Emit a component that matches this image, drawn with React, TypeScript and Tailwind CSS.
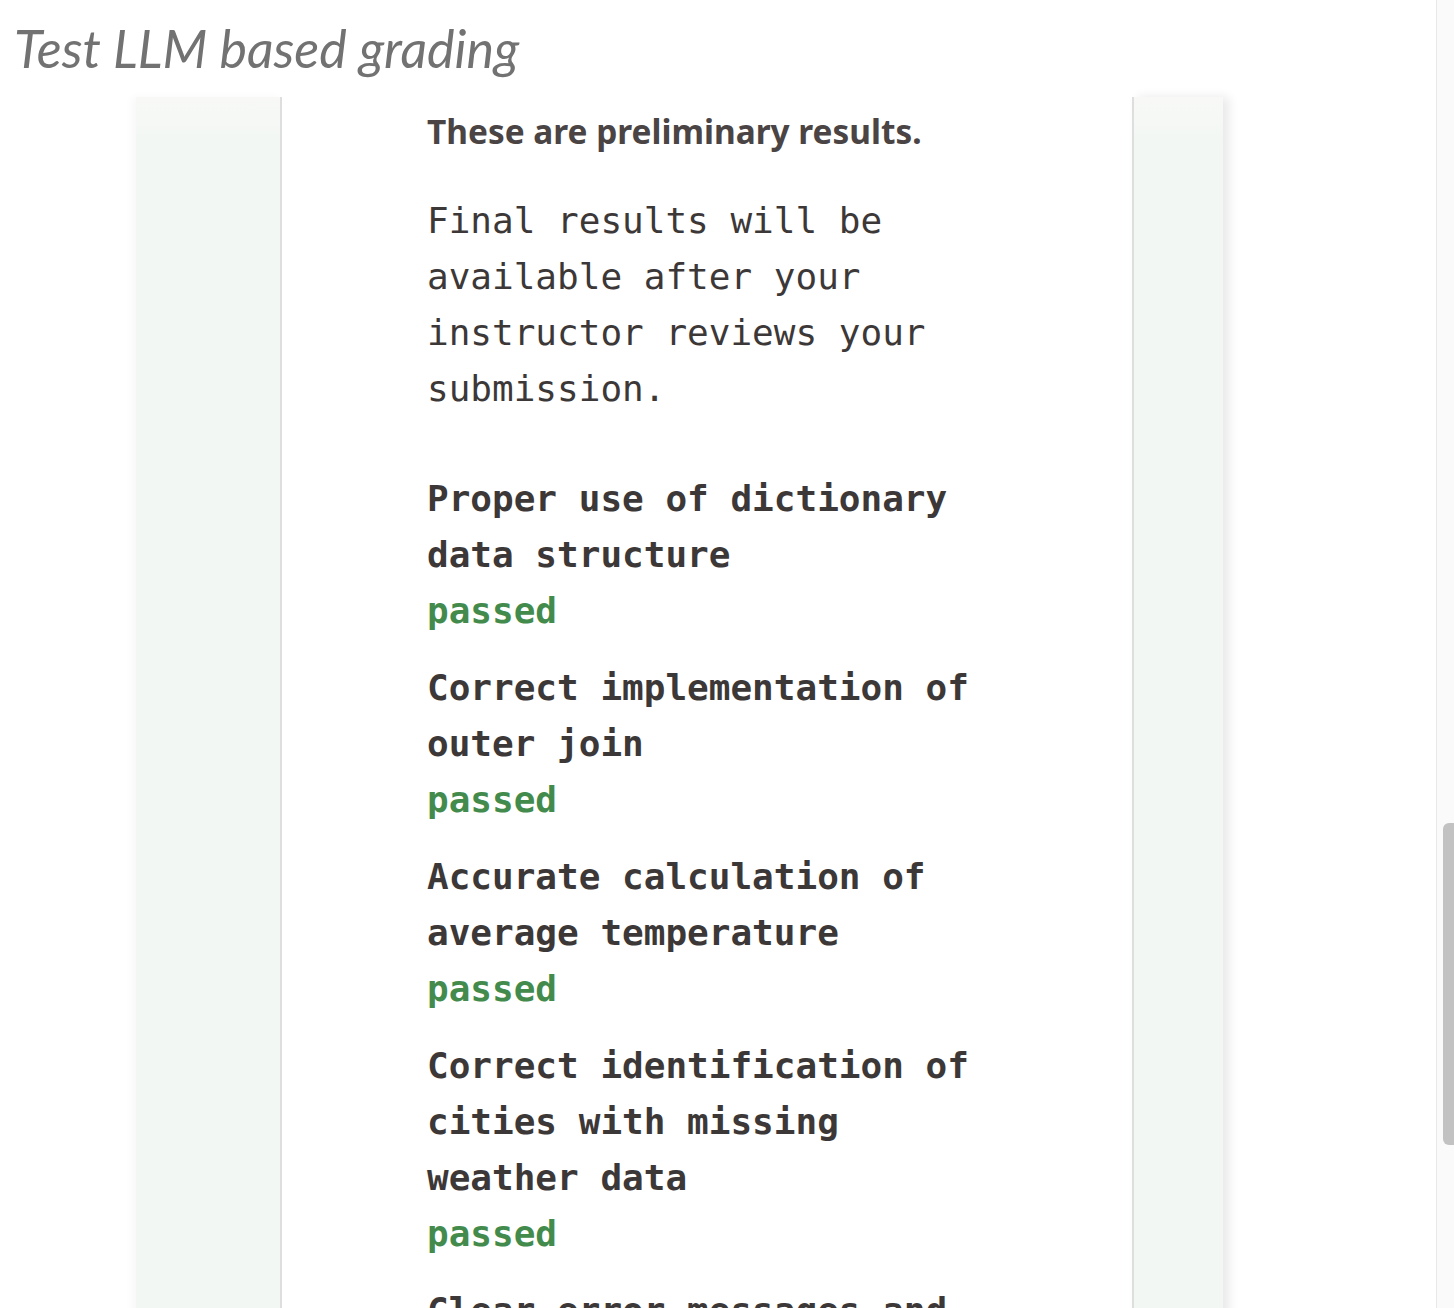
import React from 'react';

type Criterion = { title: string };

const criteria: Criterion[] = [
  { title: 'Proper use of dictionary data structure' },
  { title: 'Correct implementation of outer join' },
  { title: 'Accurate calculation of average temperature' },
  { title: 'Correct identification of cities with missing weather data' },
  { title: 'Clear error messages and helpful output' },
];

const mono = { fontFamily: '"DejaVu Sans Mono", "Liberation Mono", monospace' };

const App = () => {
  return (
    <div className="flex h-[1308px] w-full overflow-hidden bg-white">
      {/* Page */}
      <div className="flex min-w-0 flex-1 flex-col">
        <h1
          className="h-[97px] shrink-0 pl-[14px] pt-[16px] text-[52px] leading-[64px] font-normal italic text-[#727272]"
          style={{ fontFamily: 'Lato, "Open Sans", sans-serif' }}
        >
          Test LLM based grading
        </h1>

        <div className="flex flex-1 pl-[136px]">
          {/* Left gutter */}
          <div className="w-[146px] shrink-0 border-r-2 border-[#dedede] bg-gradient-to-b from-[#f8f9f7] from-0% to-[#f3f7f4] to-[3%] shadow-[-4px_0_8px_rgba(0,0,0,0.03)]" />

          {/* Main content */}
          <div className="w-[850px] shrink-0 bg-white pl-[145px] pt-[14px]">
            <p
              className="text-[33.4px] leading-[40px] font-bold text-[#4a4444]"
              style={{ fontFamily: '"Noto Sans", "Open Sans", sans-serif' }}
            >
              These are preliminary results.
            </p>

            <p className="mt-[42px] w-[560px] text-[36px] leading-[56px] text-[#3d3838]" style={mono}>
              Final results will be available after your instructor reviews your submission.
            </p>

            <div className="mt-[54px] flex w-[560px] flex-col gap-[21px]" style={mono}>
              {criteria.map((c) => (
                <div key={c.title}>
                  <p className="text-[36px] leading-[56px] font-bold text-[#3d3838]">{c.title}</p>
                  <p className="text-[36px] leading-[56px] font-bold text-[#438b4c]">passed</p>
                </div>
              ))}
            </div>
          </div>

          {/* Right gutter */}
          <div className="w-[91px] shrink-0 border-l-2 border-[#dedede] bg-gradient-to-b from-[#f8f9f7] from-0% to-[#f3f7f4] to-[3%] shadow-[6px_0_10px_rgba(0,0,0,0.09)]" />
        </div>
      </div>

      {/* Scrollbar */}
      <div className="relative h-full w-[18px] shrink-0 border-l border-[#e8e8e8] bg-[#fafafa]">
        <div className="absolute left-[6px] top-[823px] h-[322px] w-[11px] rounded-l-[6px] bg-[#c2c2c2]" />
      </div>
    </div>
  );
};

export default App;
